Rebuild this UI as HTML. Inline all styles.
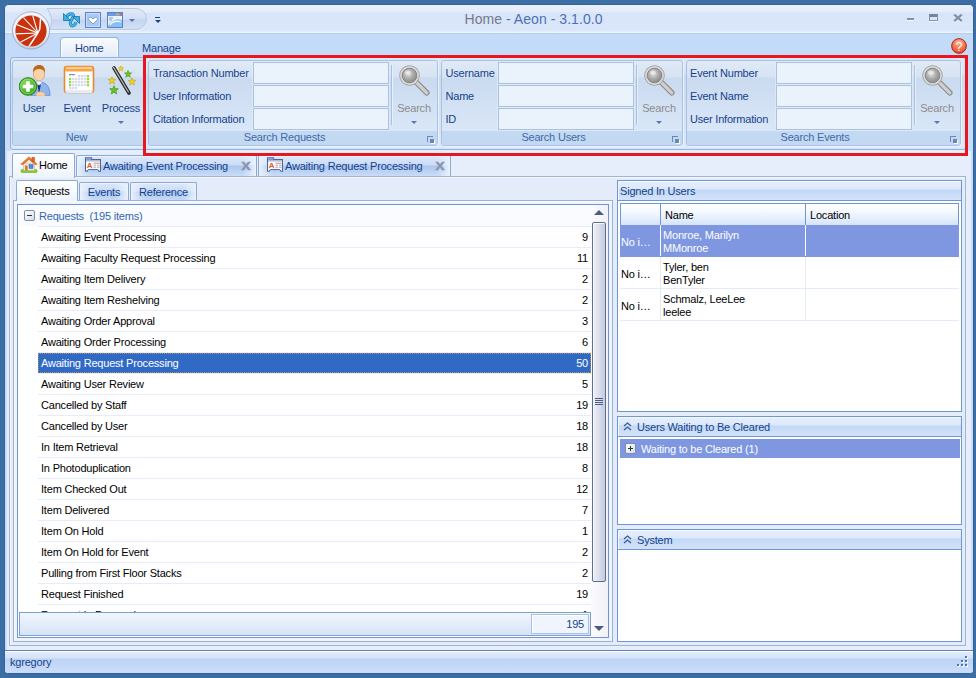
<!DOCTYPE html>
<html><head><meta charset="utf-8"><title>Home - Aeon - 3.1.0.0</title>
<style>
html,body{margin:0;padding:0}
body{width:976px;height:678px;background:#3A6EA5;position:relative;overflow:hidden;font-family:"Liberation Sans",sans-serif;font-size:11px;color:#15428B;line-height:13px}
div,span,svg,i,b,s,u{position:absolute;box-sizing:border-box;white-space:nowrap;display:block}
.t{letter-spacing:-0.2px;line-height:13px;height:13px}
.k{color:#000}
.bl{text-align:center}
.dis{color:#8D8D8D}
#win{left:4px;top:4px;width:970px;height:670px;border:1px solid #33619D;border-radius:5px 5px 4px 4px;background:#C9DCF7;overflow:hidden}
#lower{left:2px;top:146px;width:964px;height:500px;background:#E6EEFB}
#title{left:0;top:0;width:968px;height:28px;background:linear-gradient(#EAF0FB 0,#E4EBFA 7px,#D8E4F8 8px,#DAE6FA 26px,#EEF4FD 27px,#EEF4FD 28px)}
#titletxt{left:0;width:968px;top:6px;text-align:center;font-size:14px;line-height:16px;color:#4A72B4;padding-left:89px;letter-spacing:0.05px}
#tabsrow{left:0;top:28px;width:968px;height:25px;background:#C3DAF9;border-top:1px solid #B3CEF1}
#qat{left:20px;top:3px;width:122px;height:22px;border:1px solid #B4C8E8;border-radius:0 11px 11px 0;background:linear-gradient(#E3EBF8 0,#D2DEF3 10px,#C5D5EF 11px,#D5E2F6 21px);box-shadow:0 1px 0 #EEF3FC}
#cradle{left:18px;top:3px;width:36px;height:23px;overflow:hidden}
#cradle b{left:-16px;top:-1px;width:45px;height:45px;margin-top:-20px;border-radius:50%;background:#DFE8F9;border:1px solid #B4C8E8;top:11px}
.darr{width:0;height:0;border:3px solid transparent;border-top:3px solid #5577B9;border-bottom:none}
.dis2{border-top-color:#5577B9}
.hometab{left:55px;top:32px;width:59px;height:21px;border:1px solid #8DB2E3;border-bottom:none;border-radius:4px 4px 0 0;background:linear-gradient(#F8FBFF,#E1EAF6);box-shadow:inset 1px 1px 0 #fff,inset -1px 0 0 #fff}
#ribbon{left:5px;top:52px;width:956px;height:93px;border:1px solid #8DB2E3;border-radius:3px;background:linear-gradient(#DDE8F6 0,#D6E3F3 16px,#C9DAEE 17px,#DAE8FA 89px);box-shadow:0 1px 0 #E2F1F8}
.grp{top:2px;height:86px;border:1px solid #A9C2E3;border-radius:3px;background:linear-gradient(#E0EAF6 0,#D7E3F3 16px,#CADAEF 17px,#D9E7F8 69px);box-shadow:1px 1px 0 #ECF3FC;overflow:hidden}
.grp .cap{left:0;right:17px;bottom:-1px;height:15px;line-height:13px;text-align:center;color:#3E6AAA;letter-spacing:-0.2px}
.grp:before{content:"";position:absolute;left:0;right:0;bottom:0;height:14px;background:#C2D9F1}
.launch{right:4px;bottom:3px;width:6px;height:6px;border-left:1px solid #6A86B5;border-top:1px solid #6A86B5}
.launch:after{content:"";position:absolute;left:2px;top:2px;width:4px;height:4px;background:#6A86B5;box-shadow:1px 1px 0 #fff}
.inp{height:22px;border:1px solid #ABC1DE;background:#EAF2FB;box-shadow:0 0 0 1px rgba(225,235,248,.7)}
.vsep{top:4px;width:1px;height:60px;background:#A9C2E3;box-shadow:1px 0 0 #E6EFFA}
#redbox{left:143px;top:55px;width:825px;height:101px;border:3px solid #E8171F}
#page{left:4px;top:171px;width:957px;height:470px;border:1px solid #A0B4D6;background:#E4ECFA;box-shadow:inset 1px 1px 0 #F4F8FE}
.dtab{border:1px solid #8DA9D6;border-bottom:none;border-radius:2px 2px 0 0;background:linear-gradient(#DCE8FA 0,#CBDCF7 9px,#ABC7EF 10px,#C9DCF7 20px);box-shadow:inset 1px 1px 0 #EAF2FD,inset -1px 0 0 #EAF2FD}
.dtab i,.itab i{left:1px;right:1px;top:1px;bottom:0;background:linear-gradient(90deg,rgba(234,242,253,.9) 0,rgba(234,242,253,0) 12px,rgba(234,242,253,0) calc(100% - 12px),rgba(234,242,253,.9) 100%)}
.dtab.act,.itab.act{background:linear-gradient(#FFFFFF,#EEF3FC);border-color:#8DA9D6;box-shadow:none}
.x{font-weight:bold;font-size:14px;color:#8A95AD;line-height:14px;transform:scale(1.22,1.05);-webkit-text-stroke:0.3px #8A95AD}
#ipage{left:8px;top:195px;width:600px;height:442px;border:1px solid #9DB0D4;box-shadow:inset 1px 1px 0 #F6F9FE;background:#EEF3FC}
.itab{border:1px solid #8DA9D6;border-bottom:none;border-radius:2px 2px 0 0;background:linear-gradient(#DCE8FA 0,#CBDCF7 8px,#ABC7EF 9px,#C9DCF7 18px);box-shadow:inset 1px 1px 0 #EAF2FD,inset -1px 0 0 #EAF2FD}
#grid{left:12px;top:199px;width:592px;height:434px;border:1px solid #6E96D6;background:#fff;overflow:hidden}
.grow{left:0;top:0;width:573px;height:21px;background:#FAFBFE}
.pm{left:6px;top:5px;width:11px;height:11px;border:1px solid #7F8DA6;border-radius:2px;background:linear-gradient(135deg,#fff,#D5DDEB)}
.pm b{left:2px;top:4px;width:5px;height:1px;background:#333}
.pm s{left:4px;top:2px;width:1px;height:5px;background:#333}
.row{left:20px;width:553px;height:21px;border-top:1px solid #E6EDFA;color:#000}
.row .n{left:3px;top:4px}
.row .c{right:3px;top:4px}
.sel{background:#316AC5;color:#fff;background-clip:padding-box}
.sel:after{content:"";position:absolute;left:0;top:0;right:0;bottom:0;border:1px dotted #B8905A}
#gfoot{left:1px;top:407px;width:572px;height:24px;border:1px solid #7F9DCE;background:linear-gradient(#F2F6FD,#D6E3F8)}
#gsum{left:511px;top:1px;width:58px;height:20px;box-shadow:inset 1px 1px 0 #fff;border:1px solid #A9BFE3;background:#F0F5FD}
#sb{left:573px;top:0;width:17px;height:432px;background:linear-gradient(90deg,#FBFBFD,#F1F1F6)}
#sb .up{left:3px;top:5px;border:5px solid transparent;border-top:none;border-bottom:5px solid #4D5A80}
#sb .dn{left:3px;top:421px;border:5px solid transparent;border-bottom:none;border-top:5px solid #4D5A80}
#sb .thumb{left:1px;top:17px;width:14px;height:360px;border:1px solid #5E6D92;border-radius:2px;background:linear-gradient(90deg,#EDF0F7 0,#E2E6F0 4px,#CDD4E5 9px,#BDC6DD 14px);box-shadow:inset 1px 1px 0 #F8F9FC}
#sb .thumb u{left:2px;top:175px;width:8px;height:7px;background:linear-gradient(#4F5C80 0,#4F5C80 1px,transparent 1px,transparent 2px,#4F5C80 2px,#4F5C80 3px,transparent 3px,transparent 4px,#4F5C80 4px,#4F5C80 5px,transparent 5px,transparent 6px,#4F5C80 6px,#4F5C80 7px)}
.panel{border:1px solid #6E96D6;background:#fff}
.phead{left:0;top:0;right:0;height:20px;border-bottom:1px solid #6E96D6;background:linear-gradient(#E6EFFC 0,#DCE8FB 8px,#C3D8F6 9px,#D3E3FA 19px);color:#15428B;box-shadow:inset 1px 1px 0 #F6FAFF}
#ugrid{left:2px;top:22px;width:339px;height:120px}
.uh{left:0;top:0;width:339px;height:23px;border:1px solid #6E96D6;background:linear-gradient(#FFFFFF 0,#F4F8FE 8px,#D6E4F9 21px)}
.uc{top:0;bottom:0;border-right:1px solid #6E96D6}
.ur{left:0;width:339px;height:32px;border-bottom:1px solid #E3EBF9;color:#000}
.ur .uc{border-right:1px solid #E3EBF9}
.ur .t{color:#000}
.usel{background:#7E97E0;border-bottom-color:#7E97E0}
.usel .t{color:#fff}
.usel .uc{border-right-color:#fff}
.wrow{left:2px;top:22px;width:340px;height:19px;background:#7E97E0;color:#fff}
.wrow .t{color:#fff}
.wrow .pm{left:5px;top:4px;width:11px;height:11px}
#status{left:0;top:645px;width:968px;height:23px;border-top:1px solid #5C82BD;background:linear-gradient(#E4EDFB 0,#D5E3F9 7px,#BDD4F5 8px,#CBDDF8 22px);box-shadow:inset 0 1px 0 #fff}
#grip{left:952px;top:5px;width:11px;height:11px}
#grip b{width:2px;height:2px;background:#4A74B8;box-shadow:1px 1px 0 #fff}
</style></head>
<body>
<div id="win">
<div id="title"><div id="titletxt"><span style="position:static;display:inline;color:#737B87">Home</span><span style="position:static;display:inline"> - Aeon - 3.1.0.0</span></div></div>
<div id="tabsrow"></div>
<div id="lower"></div>
<div id="qat"></div>
<div id="cradle"><b></b></div>
<svg style="left:58px;top:7px" width="17" height="16" viewBox="0 0 17 16"><g fill="none" stroke="#1B86BE" stroke-width="3.2"><path d="M3.5 5.5 C5 0.5 12 0.8 10 5 C8.5 8 6 10.5 8 13 C9.5 15 12.5 13 13 10"/></g><g fill="none" stroke="#4DB8E8" stroke-width="1.6"><path d="M3.5 5.5 C5 0.5 12 0.8 10 5 C8.5 8 6 10.5 8 13 C9.5 15 12.5 13 13 10"/></g><path d="M.5 1.5 V8.5 H7.5Z" fill="#3FB0E2" stroke="#1B7DB5" stroke-width="0.9" stroke-linejoin="round"/><path d="M16.5 11.5 V4.5 H9.5Z" fill="#3FB0E2" stroke="#1B7DB5" stroke-width="0.9" stroke-linejoin="round"/></svg>
<svg style="left:80px;top:7px" width="16" height="16" viewBox="0 0 16 16"><rect x="0.5" y="0.5" width="15" height="15" fill="#A9C8F5" stroke="#5A82C8"/><rect x="1.5" y="1.5" width="13" height="13" fill="none" stroke="#C9DEFA"/><path d="M8 12 L3.5 7.5 C2.5 5.5 5.5 4 8 7 C10.5 4 13.5 5.5 12.5 7.5 Z" fill="#fff" stroke="#4A6FB0" stroke-width="0.6"/></svg>
<svg style="left:102px;top:7px" width="16" height="16" viewBox="0 0 16 16"><rect x="0.5" y="0.5" width="15" height="15" fill="#EAF3FD" stroke="#5A82C8"/><rect x="1" y="1" width="14" height="3" fill="#6C9AE0"/><rect x="9.5" y="1.5" width="1.7" height="1.7" fill="#E8D040"/><rect x="11.5" y="1.5" width="1.7" height="1.7" fill="#E89040"/><rect x="13.3" y="1.5" width="1.4" height="1.7" fill="#E05050"/><path d="M1 14 C4 8 10 6 15 8 L15 15 L1 15Z" fill="#8CC0F0"/><path d="M3 13 C6 9 10 8.5 14 10" stroke="#fff" stroke-width="1.2" fill="none"/><rect x="2" y="5.5" width="4" height="1" fill="#7F9DCE"/><rect x="2" y="7.5" width="3" height="1" fill="#7F9DCE"/></svg>
<div class="darr" style="left:124px;top:14px"></div>
<div style="left:150px;top:12px;width:5px;height:1px;background:#15428B"></div><div class="darr" style="left:150px;top:15px;border-top-color:#15428B"></div>
<svg style="left:5px;top:5px" width="40" height="40" viewBox="0 0 40 40"><defs><radialGradient id="og" cx="50%" cy="40%" r="60%"><stop offset="0" stop-color="#fff"/><stop offset="0.8" stop-color="#EEF2F8"/><stop offset="1" stop-color="#B8C4D8"/></radialGradient><clipPath id="oc"><circle cx="21" cy="21" r="15.6"/></clipPath></defs><circle cx="21" cy="20.5" r="18.6" fill="url(#og)" stroke="#8FA3C4" stroke-width="0.8"/><circle cx="21" cy="21" r="15.6" fill="#C8320F"/><g clip-path="url(#oc)" stroke="#fff" stroke-width="1.1" fill="none"><path d="M27.8 23 L12 6"/><path d="M27.8 23 L22 3"/><path d="M27.8 23 L4 13.5"/><path d="M27.8 23 L3 24"/><path d="M27.8 23 L5 35"/><path d="M27.8 23 L17 39.5" stroke-width="1.5"/><path d="M30.8 5 L29.8 19 L27.8 23" stroke-width="1.5"/></g></svg>
<div style="left:902px;top:13px;width:7px;height:2px;background:#8391AB;border-bottom:1px solid #F4F8FD;height:3px"></div>
<div style="left:924px;top:9px;width:9px;height:7px;border:1px solid #8391AB;border-top:3px solid #7483A0;box-shadow:0 1px 0 #F4F8FD"></div>
<svg style="left:948px;top:9px" width="11" height="9" viewBox="0 0 11 9"><path d="M1.2 1.6 L8.8 8.2 M8.8 1.6 L1.2 8.2" stroke="#F4F8FD" stroke-width="2.3"/><path d="M1.2 0.6 L8.8 7.2 M8.8 0.6 L1.2 7.2" stroke="#8391AB" stroke-width="2.3"/></svg>
<div class="hometab"></div>
<div class="t" style="left:70px;top:37px">Home</div>
<div class="t" style="left:137px;top:37px">Manage</div>
<svg style="left:946px;top:33px" width="16" height="16" viewBox="0 0 17 17"><defs><radialGradient id="hg" cx="50%" cy="25%" r="75%"><stop offset="0" stop-color="#FFB090"/><stop offset="0.55" stop-color="#F67A52"/><stop offset="1" stop-color="#E24A24"/></radialGradient></defs><circle cx="8.5" cy="8.5" r="7.8" fill="url(#hg)" stroke="#A31A0C" stroke-width="1"/><text x="8.6" y="13.4" text-anchor="middle" font-family="Liberation Sans, sans-serif" font-size="13.5" fill="#fff">?</text></svg>
<div id="ribbon">
<div class="grp" style="left:1px;width:133px"><div class="cap" style="right:4px">New</div>
<svg style="left:6px;top:3px" width="32" height="32" viewBox="0 0 32 32"><defs><radialGradient id="ug" cx="40%" cy="35%" r="70%"><stop offset="0" stop-color="#8BE05A"/><stop offset="1" stop-color="#2E9A18"/></radialGradient></defs><path d="M12 32 C11 22 14 18 20 18 C27 18 31 22 31 32Z" fill="#8FB4EE" stroke="#5C86D0" stroke-width="0.8"/><path d="M20 19 L18.5 21 L20 30 L21.8 21Z" fill="#22356E"/><path d="M17 18.5 L20 21.5 L23 18.5 L20 17Z" fill="#E8F0FC"/><ellipse cx="20" cy="10" rx="5.6" ry="6.8" fill="#FBD3A8" stroke="#D89A60" stroke-width="0.7"/><path d="M14 9 C13.5 3 17 1 20 1 C24 1 26.5 3.5 26 9 C25 6 23 5 20 5 C17 5 15 6 14 9Z" fill="#B86A1C"/><path d="M17 30 C19 27 24 27 26 30 L26 32 L17 32Z" fill="#FBD3A8" stroke="#D89A60" stroke-width="0.5"/><circle cx="9" cy="22.5" r="8.8" fill="url(#ug)" stroke="#2A8014" stroke-width="1"/><circle cx="9" cy="22.5" r="7.4" fill="none" stroke="#B8F090" stroke-width="0.8" opacity=".7"/><path d="M7.2 17.2 h3.6 v3.5 h3.5 v3.6 h-3.5 v3.5 h-3.6 v-3.5 h-3.5 v-3.6 h3.5Z" fill="#fff"/></svg>
<svg style="left:50px;top:3px" width="32" height="32" viewBox="0 0 32 32"><rect x="1.5" y="2.5" width="29" height="26" rx="2.5" fill="#fff" stroke="#E8892A" stroke-width="1.6"/><rect x="2" y="2.5" width="28" height="5" rx="2" fill="#F5A64A"/><rect x="3" y="3.3" width="26" height="1.5" rx=".7" fill="#FDD9A8"/><path d="M2.5 26 h27 v1.5 a1.5 1.5 0 0 1 -1.5 1.5 h-24 a1.5 1.5 0 0 1 -1.5 -1.5Z" fill="#E6ECF6"/><rect x="6" y="10" width="6" height="1.3" fill="#7A8FC0"/><g fill="#D5DBEA"><rect x="14" y="11" width="12" height="2.2"/><rect x="6" y="14" width="20" height="2.2"/><rect x="6" y="17" width="20" height="2.2"/><rect x="6" y="20" width="20" height="2.2"/><rect x="6" y="23" width="9" height="2.2"/></g><g fill="#8EE02A"><rect x="6" y="14" width="2.2" height="2.2"/><rect x="6" y="17" width="2.2" height="2.2"/><rect x="6" y="20" width="2.2" height="2.2"/><rect x="23.8" y="11" width="2.2" height="2.2"/><rect x="23.8" y="14" width="2.2" height="2.2"/><rect x="23.8" y="17" width="2.2" height="2.2"/><rect x="23.8" y="20" width="2.2" height="2.2"/></g><g stroke="#fff" stroke-width=".8"><path d="M8.6 11v14.5M11.6 11v14.5M14.6 11v14.5M17.6 11v14.5M20.6 11v14.5M23.4 11v14.5"/></g></svg>
<svg style="left:94px;top:3px" width="32" height="32" viewBox="0 0 32 32"><path d="M7 4 L22 29" stroke="#2A2A2A" stroke-width="3.6" stroke-linecap="round"/><path d="M6.6 3.4 L21.4 28" stroke="#B8B8B8" stroke-width="1.2" stroke-linecap="round"/><g stroke-width=".6"><path transform="translate(14,4.5) scale(.75)" d="M0 -3.6 L1 -1.2 L3.6 -1 L1.6 .7 L2.3 3.3 L0 1.9 L-2.3 3.3 L-1.6 .7 L-3.6 -1 L-1 -1.2Z" fill="#F2D21E" stroke="#C8A010"/><path transform="translate(21,10) scale(1)" d="M0 -3.6 L1 -1.2 L3.6 -1 L1.6 .7 L2.3 3.3 L0 1.9 L-2.3 3.3 L-1.6 .7 L-3.6 -1 L-1 -1.2Z" fill="#6DBE2A" stroke="#4A9A18"/><path transform="translate(25,17.5) scale(1.05)" d="M0 -3.6 L1 -1.2 L3.6 -1 L1.6 .7 L2.3 3.3 L0 1.9 L-2.3 3.3 L-1.6 .7 L-3.6 -1 L-1 -1.2Z" fill="#F2D21E" stroke="#C8A010"/><path transform="translate(5,16.5) scale(1.05)" d="M0 -3.6 L1 -1.2 L3.6 -1 L1.6 .7 L2.3 3.3 L0 1.9 L-2.3 3.3 L-1.6 .7 L-3.6 -1 L-1 -1.2Z" fill="#F2D21E" stroke="#C8A010"/><path transform="translate(7,26) scale(1.2)" d="M0 -3.6 L1 -1.2 L3.6 -1 L1.6 .7 L2.3 3.3 L0 1.9 L-2.3 3.3 L-1.6 .7 L-3.6 -1 L-1 -1.2Z" fill="#6DBE2A" stroke="#4A9A18"/></g></svg>
<div class="t bl" style="left:-1px;width:44px;top:41px">User</div>
<div class="t bl" style="left:42px;width:44px;top:41px">Event</div>
<div class="t bl" style="left:85px;width:46px;top:41px">Process</div>
<div class="darr" style="left:105px;top:60px"></div>
</div>
<div class="grp" style="left:137px;width:290px"><div class="cap">Search Requests</div><div class="launch"></div>
<div class="t" style="left:4px;top:6px">Transaction Number</div>
<div class="inp" style="left:104px;top:1px;width:136px"></div>
<div class="t" style="left:4px;top:29px">User Information</div>
<div class="inp" style="left:104px;top:24px;width:136px"></div>
<div class="t" style="left:4px;top:52px">Citation Information</div>
<div class="inp" style="left:104px;top:47px;width:136px"></div>
<div class="vsep" style="left:242px"></div>
<svg style="left:249px;top:3px" width="32" height="32" viewBox="0 0 32 32"><defs><radialGradient id="mg" cx="42%" cy="38%" r="62%"><stop offset="0" stop-color="#E4E4E4"/><stop offset="0.55" stop-color="#ABABAB"/><stop offset="1" stop-color="#8C8C8C"/></radialGradient></defs><path d="M18.5 18.5 L28.8 28.8" stroke="#8E8E8E" stroke-width="5.6" stroke-linecap="round"/><path d="M18.5 18.5 L28.8 28.8" stroke="#CFCFCF" stroke-width="3.2" stroke-linecap="round"/><circle cx="11.5" cy="11.5" r="10.2" fill="#9C9C9C"/><circle cx="11.5" cy="11.5" r="9.4" fill="#DADADA"/><circle cx="11.5" cy="11.5" r="7.3" fill="url(#mg)" stroke="#858585" stroke-width="1"/><ellipse cx="9.8" cy="8.6" rx="3" ry="2" fill="#fff" opacity=".45"/></svg>
<div class="t bl dis" style="left:245px;width:40px;top:41px">Search</div>
<div class="darr dis2" style="left:262px;top:60px"></div>
</div>
<div class="grp" style="left:430px;width:242px"><div class="cap">Search Users</div><div class="launch"></div>
<div class="t" style="left:3.5px;top:6px">Username</div>
<div class="inp" style="left:56px;top:1px;width:136px"></div>
<div class="t" style="left:3.5px;top:29px">Name</div>
<div class="inp" style="left:56px;top:24px;width:136px"></div>
<div class="t" style="left:3.5px;top:52px">ID</div>
<div class="inp" style="left:56px;top:47px;width:136px"></div>
<div class="vsep" style="left:194px"></div>
<svg style="left:201px;top:3px" width="32" height="32" viewBox="0 0 32 32"><defs><radialGradient id="mg" cx="42%" cy="38%" r="62%"><stop offset="0" stop-color="#E4E4E4"/><stop offset="0.55" stop-color="#ABABAB"/><stop offset="1" stop-color="#8C8C8C"/></radialGradient></defs><path d="M18.5 18.5 L28.8 28.8" stroke="#8E8E8E" stroke-width="5.6" stroke-linecap="round"/><path d="M18.5 18.5 L28.8 28.8" stroke="#CFCFCF" stroke-width="3.2" stroke-linecap="round"/><circle cx="11.5" cy="11.5" r="10.2" fill="#9C9C9C"/><circle cx="11.5" cy="11.5" r="9.4" fill="#DADADA"/><circle cx="11.5" cy="11.5" r="7.3" fill="url(#mg)" stroke="#858585" stroke-width="1"/><ellipse cx="9.8" cy="8.6" rx="3" ry="2" fill="#fff" opacity=".45"/></svg>
<div class="t bl dis" style="left:197px;width:40px;top:41px">Search</div>
<div class="darr dis2" style="left:214px;top:60px"></div>
</div>
<div class="grp" style="left:675px;width:275px"><div class="cap">Search Events</div><div class="launch"></div>
<div class="t" style="left:3px;top:6px">Event Number</div>
<div class="inp" style="left:89px;top:1px;width:136px"></div>
<div class="t" style="left:3px;top:29px">Event Name</div>
<div class="inp" style="left:89px;top:24px;width:136px"></div>
<div class="t" style="left:3px;top:52px">User Information</div>
<div class="inp" style="left:89px;top:47px;width:136px"></div>
<div class="vsep" style="left:227px"></div>
<svg style="left:234px;top:3px" width="32" height="32" viewBox="0 0 32 32"><defs><radialGradient id="mg" cx="42%" cy="38%" r="62%"><stop offset="0" stop-color="#E4E4E4"/><stop offset="0.55" stop-color="#ABABAB"/><stop offset="1" stop-color="#8C8C8C"/></radialGradient></defs><path d="M18.5 18.5 L28.8 28.8" stroke="#8E8E8E" stroke-width="5.6" stroke-linecap="round"/><path d="M18.5 18.5 L28.8 28.8" stroke="#CFCFCF" stroke-width="3.2" stroke-linecap="round"/><circle cx="11.5" cy="11.5" r="10.2" fill="#9C9C9C"/><circle cx="11.5" cy="11.5" r="9.4" fill="#DADADA"/><circle cx="11.5" cy="11.5" r="7.3" fill="url(#mg)" stroke="#858585" stroke-width="1"/><ellipse cx="9.8" cy="8.6" rx="3" ry="2" fill="#fff" opacity=".45"/></svg>
<div class="t bl dis" style="left:230px;width:40px;top:41px">Search</div>
<div class="darr dis2" style="left:247px;top:60px"></div>
</div>
</div>
<div id="page"></div>
<div class="dtab act" style="left:7px;top:148px;width:63px;height:25px"></div>
<svg style="left:15px;top:151px" width="18" height="17" viewBox="0 0 18 17"><rect x="1" y="13.5" width="16" height="3" rx="1.2" fill="#7ED321" stroke="#4CA010" stroke-width=".5"/><rect x="3.5" y="7" width="11" height="7.5" fill="#FCEBD0" stroke="#D0A070" stroke-width=".5"/><path d="M9 0.8 L0.8 8.2 L3 8.6 L9 3.4 L15 8.6 L17.2 8.2Z" fill="#F07828" stroke="#C85010" stroke-width=".5"/><rect x="12" y="1.5" width="2.5" height="4" fill="#E86820" stroke="#A84010" stroke-width=".5"/><rect x="9" y="8.5" width="4" height="4" fill="#4A90E8" stroke="#2A60B0" stroke-width=".5"/><rect x="5" y="9.5" width="2.6" height="5" fill="#C87838"/></svg>
<div class="t k" style="left:34px;top:154px">Home</div>
<div class="dtab" style="left:71px;top:150px;width:181px;height:21px"><i></i>
<svg style="left:8px;top:1px" width="16" height="15" viewBox="0 0 15 15" preserveAspectRatio="none"><path d="M.5 .8 H6.2 V2.6 H14.5 V14.3 L12.9 14.3 C12.5 12.4 11 12.2 10.2 12.6 C9.4 12.2 8.3 12.2 7.5 12.8 C6.7 12.2 5.6 12.2 4.8 12.6 C4 12.2 2.5 12.4 2.1 14.3 L.5 14.3Z" fill="#fff" stroke="#4E6496" stroke-width="1"/><rect x="1" y="1.2" width="4.8" height="1.8" fill="#7D97CC"/><rect x="1" y="3" width="13" height="1.6" fill="#A9BCE2"/><text x="1.6" y="10.6" font-family="Liberation Sans, sans-serif" font-weight="bold" font-size="7.5" fill="#E05A1E">A</text><path d="M8 6.3h5.6" stroke="#E8844A" stroke-width="1"/><path d="M8 8.3h2.3M11.2 8.3h2.4M8 10.3h2.3M11.2 10.3h2.4" stroke="#9AA8C8" stroke-width="1"/></svg>
<div class="t" style="left:26px;top:4px">Awaiting Event Processing</div>
<div class="x" style="right:6px;top:2px">x</div>
</div>
<div class="dtab" style="left:253px;top:150px;width:193px;height:21px"><i></i>
<svg style="left:8px;top:1px" width="16" height="15" viewBox="0 0 15 15" preserveAspectRatio="none"><path d="M.5 .8 H6.2 V2.6 H14.5 V14.3 L12.9 14.3 C12.5 12.4 11 12.2 10.2 12.6 C9.4 12.2 8.3 12.2 7.5 12.8 C6.7 12.2 5.6 12.2 4.8 12.6 C4 12.2 2.5 12.4 2.1 14.3 L.5 14.3Z" fill="#fff" stroke="#4E6496" stroke-width="1"/><rect x="1" y="1.2" width="4.8" height="1.8" fill="#7D97CC"/><rect x="1" y="3" width="13" height="1.6" fill="#A9BCE2"/><text x="1.6" y="10.6" font-family="Liberation Sans, sans-serif" font-weight="bold" font-size="7.5" fill="#E05A1E">A</text><path d="M8 6.3h5.6" stroke="#E8844A" stroke-width="1"/><path d="M8 8.3h2.3M11.2 8.3h2.4M8 10.3h2.3M11.2 10.3h2.4" stroke="#9AA8C8" stroke-width="1"/></svg>
<div class="t" style="left:26px;top:4px">Awaiting Request Processing</div>
<div class="x" style="right:6px;top:2px">x</div>
</div>
<div id="ipage"></div>
<div class="itab act" style="left:11px;top:175px;width:62px;height:21px"><div class="t k" style="left:0;right:0;top:4px;text-align:center">Requests</div></div>
<div class="itab" style="left:74px;top:177px;width:50px;height:18px"><i></i><div class="t" style="left:0;right:0;top:3px;text-align:center">Events</div></div>
<div class="itab" style="left:125px;top:177px;width:67px;height:18px"><i></i><div class="t" style="left:0;right:0;top:3px;text-align:center">Reference</div></div>
<div id="grid">
<div class="grow"><div class="pm"><b></b></div><div class="t" style="left:21px;top:5px;color:#3165B5">Requests&nbsp; (195 items)</div></div>
<div class="row" style="top:21px"><span class="t n">Awaiting Event Processing</span><span class="t c">9</span></div>
<div class="row" style="top:42px"><span class="t n">Awaiting Faculty Request Processing</span><span class="t c">11</span></div>
<div class="row" style="top:63px"><span class="t n">Awaiting Item Delivery</span><span class="t c">2</span></div>
<div class="row" style="top:84px"><span class="t n">Awaiting Item Reshelving</span><span class="t c">2</span></div>
<div class="row" style="top:105px"><span class="t n">Awaiting Order Approval</span><span class="t c">3</span></div>
<div class="row" style="top:126px"><span class="t n">Awaiting Order Processing</span><span class="t c">6</span></div>
<div class="row sel" style="top:147px"><span class="t n">Awaiting Request Processing</span><span class="t c">50</span></div>
<div class="row" style="top:168px"><span class="t n">Awaiting User Review</span><span class="t c">5</span></div>
<div class="row" style="top:189px"><span class="t n">Cancelled by Staff</span><span class="t c">19</span></div>
<div class="row" style="top:210px"><span class="t n">Cancelled by User</span><span class="t c">18</span></div>
<div class="row" style="top:231px"><span class="t n">In Item Retrieval</span><span class="t c">18</span></div>
<div class="row" style="top:252px"><span class="t n">In Photoduplication</span><span class="t c">8</span></div>
<div class="row" style="top:273px"><span class="t n">Item Checked Out</span><span class="t c">12</span></div>
<div class="row" style="top:294px"><span class="t n">Item Delivered</span><span class="t c">7</span></div>
<div class="row" style="top:315px"><span class="t n">Item On Hold</span><span class="t c">1</span></div>
<div class="row" style="top:336px"><span class="t n">Item On Hold for Event</span><span class="t c">2</span></div>
<div class="row" style="top:357px"><span class="t n">Pulling from First Floor Stacks</span><span class="t c">2</span></div>
<div class="row" style="top:378px"><span class="t n">Request Finished</span><span class="t c">19</span></div>
<div class="row" style="top:399px"><span class="t n">Request In Processing</span><span class="t c">1</span></div>
<div id="gfoot"><div id="gsum"><span class="t" style="right:4px;top:3px">195</span></div></div>
<div id="sb"><div class="up"></div><div class="thumb"><u></u></div><div class="dn"></div></div>
</div>
<div class="panel" style="left:612px;top:175px;width:345px;height:232px"><div class="phead"><span class="t" style="left:2px;top:4px">Signed In Users</span></div>
<div id="ugrid"><div class="uh"><div class="uc" style="left:0;width:40px"></div><div class="uc" style="left:40px;width:145px"><span class="t k" style="left:4px;top:5px">Name</span></div><div class="uc" style="left:185px;width:152px;border-right:none"><span class="t k" style="left:4px;top:5px">Location</span></div></div>
<div class="ur usel" style="top:22px"><div class="uc" style="left:0;width:41px"><span class="t" style="left:1px;top:11px">No i&#8230;</span></div><div class="uc" style="left:41px;width:145px"><span class="t" style="left:2px;top:4px">Monroe, Marilyn</span><span class="t" style="left:2px;top:17px">MMonroe</span></div></div>
<div class="ur" style="top:54px"><div class="uc" style="left:0;width:41px"><span class="t" style="left:1px;top:11px">No i&#8230;</span></div><div class="uc" style="left:41px;width:145px"><span class="t" style="left:2px;top:4px">Tyler, ben</span><span class="t" style="left:2px;top:17px">BenTyler</span></div></div>
<div class="ur" style="top:86px"><div class="uc" style="left:0;width:41px"><span class="t" style="left:1px;top:11px">No i&#8230;</span></div><div class="uc" style="left:41px;width:145px"><span class="t" style="left:2px;top:4px">Schmalz, LeeLee</span><span class="t" style="left:2px;top:17px">leelee</span></div></div>
</div></div>
<div class="panel" style="left:612px;top:411px;width:345px;height:109px"><div class="phead"><svg style="left:5px;top:5px" width="9" height="9" viewBox="0 0 9 9"><path d="M1 4 L4.5 1 L8 4M1 8 L4.5 5 L8 8" stroke="#3A5A9A" stroke-width="1.3" fill="none"/></svg><span class="t" style="left:19px;top:4px">Users Waiting to Be Cleared</span></div>
<div class="wrow"><div class="pm plus"><b></b><s></s></div><span class="t" style="left:21px;top:4px">Waiting to be Cleared (1)</span></div></div>
<div class="panel" style="left:612px;top:524px;width:345px;height:113px"><div class="phead"><svg style="left:5px;top:5px" width="9" height="9" viewBox="0 0 9 9"><path d="M1 4 L4.5 1 L8 4M1 8 L4.5 5 L8 8" stroke="#3A5A9A" stroke-width="1.3" fill="none"/></svg><span class="t" style="left:19px;top:4px">System</span></div></div>
<div id="status"><span class="t" style="left:5px;top:5px">kgregory</span><div id="grip"><b style="left:8px;top:0"></b><b style="left:4px;top:4px"></b><b style="left:8px;top:4px"></b><b style="left:0;top:8px"></b><b style="left:4px;top:8px"></b><b style="left:8px;top:8px"></b></div></div>
</div>
<div id="redbox"></div>
</body></html>
